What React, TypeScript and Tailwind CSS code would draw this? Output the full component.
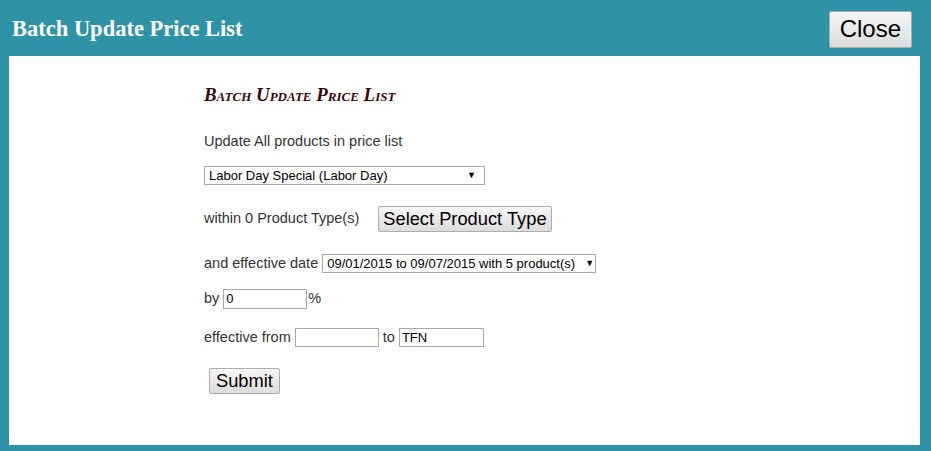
import React from "react";

const btn =
  "border border-[#adadad] bg-gradient-to-b from-[#f6f6f6] to-[#dcdcdc] text-black rounded-[2px] leading-none font-['Liberation_Sans',Arial,sans-serif]";

function FakeSelect({ text, className }: { text: string; className: string }) {
  return (
    <div
      className={`flex items-center h-[19px] border border-[#a9a9a9] bg-white text-[13px] text-black pl-[4px] pr-[8px] ${className}`}
    >
      <span className="flex-1 whitespace-nowrap leading-none">{text}</span>
      <span className="text-[9px] leading-none ml-[10px]">▼</span>
    </div>
  );
}

export default function App() {
  return (
    <div className="w-[931px] h-[451px] bg-[#2f93a8] flex flex-col overflow-hidden font-['Liberation_Sans',Arial,sans-serif]">
      <div className="h-[56px] flex items-center justify-between pl-[12px] pr-[19px]">
        <h1 className="text-white font-bold text-[22.5px] font-['Liberation_Serif','Times_New_Roman',serif] leading-none mt-[2px]">
          Batch Update Price List
        </h1>
        <button className={`${btn} h-[37px] px-[10px] text-[24px] mt-[2px]`}>Close</button>
      </div>
      <div className="ml-[9px] mr-[11px] h-[389px] bg-white pl-[195px] pt-[29px] text-[14.5px] text-[#333333]">
        <div className="h-[20px] flex items-center font-['Liberation_Serif','Times_New_Roman',serif] italic font-bold [font-variant:small-caps] text-[18.9px] text-[#3a0606]">
          Batch Update Price List
        </div>
        <div className="mt-[27px] h-[20px] flex items-center">Update All products in price list</div>
        <FakeSelect text="Labor Day Special (Labor Day)" className="mt-[14px] w-[281px]" />
        <div className="mt-[21px] h-[26px] flex items-center">
          <span>within 0 Product Type(s)</span>
          <button className={`${btn} ml-[19px] h-[26px] px-[4px] text-[18.3px]`}>Select Product Type</button>
        </div>
        <div className="mt-[22px] h-[19px] flex items-center">
          <span className="mr-[4px]">and effective date</span>
          <FakeSelect text="09/01/2015 to 09/07/2015 with 5 product(s)" className="w-[274px]" />
        </div>
        <div className="mt-[16px] h-[20px] flex items-center">
          <span className="mr-[4px]">by</span>
          <div className="w-[84px] h-[20px] border border-[#a9a9a9] flex items-center pl-[2px] text-[13px] text-black">0</div>
          <span className="ml-[1px]">%</span>
        </div>
        <div className="mt-[19px] h-[19px] flex items-center">
          <span className="mr-[4px]">effective from</span>
          <div className="w-[84px] h-[19px] border border-[#a9a9a9]" />
          <span className="ml-[4px] mr-[4px]">to</span>
          <div className="w-[85px] h-[19px] border border-[#a9a9a9] flex items-center pl-[2px] text-[13px] text-black">TFN</div>
        </div>
        <button className={`${btn} mt-[21px] ml-[5px] h-[26px] px-[6px] text-[18.3px]`}>Submit</button>
      </div>
    </div>
  );
}
